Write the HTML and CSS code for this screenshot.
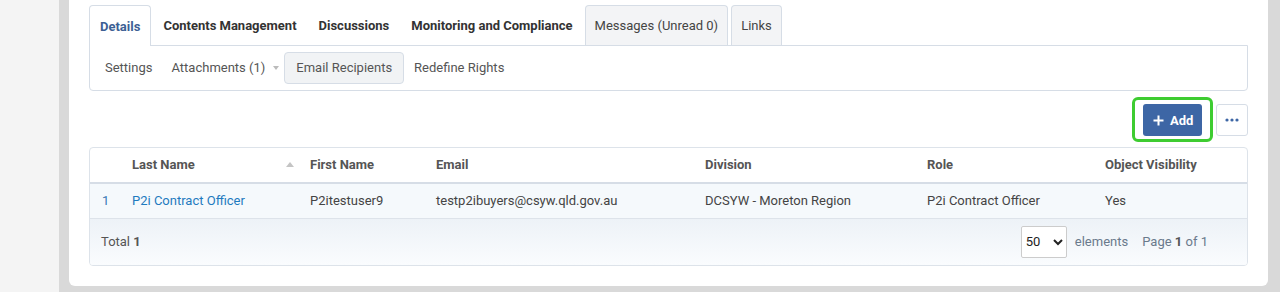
FILE: index.html
```html
<!DOCTYPE html>
<html lang="en">
<head>
    <meta charset="UTF-8">
    <meta name="viewport" content="width=device-width, initial-scale=1.0">
    <title>Email Recipients</title>
    <link rel="stylesheet" href="styles.css">
</head>
<body>
    <div class="sidebar"></div>
    <div class="content">
        <div class="card">
            <div class="tabs">
                <a class="tab active">Details</a>
                <a class="tab">Contents Management</a>
                <a class="tab">Discussions</a>
                <a class="tab">Monitoring and Compliance</a>
                <a class="tab boxed">Messages (Unread 0)</a>
                <a class="tab boxed">Links</a>
            </div>
            <div class="subnav">
                <a class="subitem">Settings</a>
                <a class="subitem">Attachments (1) <span class="caret"></span></a>
                <a class="subitem current">Email Recipients</a>
                <a class="subitem">Redefine Rights</a>
            </div>
            <div class="toolbar">
                <span class="highlight">
                    <button class="btn-add">
                        <svg width="11" height="11" viewBox="0 0 11 11"><path d="M5.5 0.5v10M0.5 5.5h10" stroke="#fff" stroke-width="2"/></svg>
                        Add
                    </button>
                </span>
                <button class="btn-more">
                    <svg width="14" height="4" viewBox="0 0 14 4"><circle cx="2" cy="2" r="1.6" fill="#3d66a5"/><circle cx="7" cy="2" r="1.6" fill="#3d66a5"/><circle cx="12" cy="2" r="1.6" fill="#3d66a5"/></svg>
                </button>
            </div>
            <div class="grid">
                <table>
                    <colgroup>
                        <col style="width:30px">
                        <col style="width:178px">
                        <col style="width:126px">
                        <col style="width:269px">
                        <col style="width:222px">
                        <col style="width:178px">
                        <col style="width:154px">
                    </colgroup>
                    <thead>
                        <tr>
                            <th></th>
                            <th><div class="sortable">Last Name <span class="sort-up"></span></div></th>
                            <th>First Name</th>
                            <th>Email</th>
                            <th>Division</th>
                            <th>Role</th>
                            <th>Object Visibility</th>
                        </tr>
                    </thead>
                    <tbody>
                        <tr>
                            <td class="num">1</td>
                            <td><a class="link">P2i Contract Officer</a></td>
                            <td>P2itestuser9</td>
                            <td>testp2ibuyers@csyw.qld.gov.au</td>
                            <td>DCSYW - Moreton Region</td>
                            <td>P2i Contract Officer</td>
                            <td>Yes</td>
                        </tr>
                    </tbody>
                </table>
                <div class="grid-footer">
                    <div class="total">Total <b>1</b></div>
                    <div class="paging">
                        <select class="page-size">
                            <option>50</option>
                        </select>
                        <span class="muted">elements</span>
                        <span class="muted">Page <b>1</b> of 1</span>
                    </div>
                </div>
            </div>
        </div>
    </div>
</body>
</html>
```

FILE: styles.css
```css
html, body {
    height: 100%;
}
body {
    margin: 0;
    display: flex;
    font-family: Roboto, "Liberation Sans", Arial, sans-serif;
    font-size: 13px;
    color: #555;
    background: #f4f4f4;
}
.sidebar {
    width: 60px;
    background: #f4f4f4;
}
.content {
    flex: 1;
    background: #d9d9d9;
    padding: 0 12px 7px 10px;
}
.card {
    background: #fff;
    padding: 5px 20px 20px 20px;
    border-radius: 0 0 6px 6px;
}

/* tabs */
.tabs {
    display: flex;
    height: 40px;
}
.tab {
    display: flex;
    align-items: center;
    padding: 0 11px;
    font-weight: bold;
    color: #333;
    border-radius: 4px 4px 0 0;
}
.tab.active {
    color: #3d5f94;
    background: #fff;
    border: 1px solid #d6dde6;
    border-bottom: none;
    position: relative;
    z-index: 1;
    height: 41px;
    box-sizing: border-box;
    padding: 1px 10px 0 10px;
    margin-right: 1px;
}
.tab.boxed {
    font-weight: normal;
    color: #444;
    background: #f3f4f6;
    border: 1px solid #d6dde6;
    border-bottom: none;
    padding: 0 9px 0 9px;
    margin-left: 1px;
}
.tab.boxed + .tab.boxed {
    margin-left: 3px;
}

.subnav {
    display: flex;
    align-items: center;
    height: 44px;
    padding: 0 5px;
    border: 1px solid #d6dde6;
    border-radius: 0 0 4px 4px;
}
.subitem {
    display: flex;
    align-items: center;
    height: 32px;
    padding: 0 10px 1px 10px;
    color: #555;
    box-sizing: border-box;
}
.subitem:nth-child(2) {
    padding-left: 9px;
    padding-right: 5px;
}
.caret {
    width: 0;
    height: 0;
    margin-left: 8px;
    border-left: 3.5px solid transparent;
    border-right: 3.5px solid transparent;
    border-top: 4px solid #bbb;
}
.subitem.current {
    background: #f1f3f5;
    border: 1px solid #d6dde6;
    border-radius: 4px;
    padding: 0 11px 1px 11px;
}

/* toolbar */
.toolbar {
    display: flex;
    justify-content: flex-end;
    align-items: center;
    padding: 6px 0 5px 0;
    gap: 3px;
}
.highlight {
    display: flex;
    border: 3px solid #3ecc31;
    border-radius: 6px;
    padding: 4px 8px 3px 8px;
}
.btn-add {
    display: flex;
    align-items: center;
    gap: 6px;
    height: 32px;
    width: 59px;
    padding: 0 0 0 10px;
    border: none;
    border-radius: 3px;
    background: #3d66a5;
    color: #fff;
    font-family: inherit;
    font-size: 13px;
    font-weight: bold;
}
.btn-more {
    display: flex;
    align-items: center;
    justify-content: center;
    width: 32px;
    height: 32px;
    background: #fff;
    border: 1px solid #d6dde6;
    border-radius: 3px;
    padding: 0;
}

/* grid */
.grid {
    border: 1px solid #dde3ea;
    border-radius: 4px;
    overflow: hidden;
}
table {
    width: 100%;
    table-layout: fixed;
    border-collapse: collapse;
}
th {
    height: 33px;
    text-align: left;
    padding: 0 12px 1px 12px;
    font-weight: bold;
    color: #555;
    border-bottom: 2px solid #d6dde6;
}
td {
    height: 33px;
    padding: 0 12px 1px 12px;
    color: #444;
    background: #f5f9fc;
    border-bottom: 1px solid #dde3ea;
}
.num {
    color: #3a78b5;
}
.link {
    color: #1f7bbf;
}
.sortable {
    display: flex;
    align-items: center;
    justify-content: space-between;
    margin-right: -8px;
}
.sort-up {
    width: 0;
    height: 0;
    border-left: 4.5px solid transparent;
    border-right: 4.5px solid transparent;
    border-bottom: 5px solid #c4c4c4;
}
.grid-footer {
    display: flex;
    justify-content: space-between;
    align-items: center;
    height: 46px;
    padding: 0 39px 1px 11px;
    box-sizing: border-box;
    background: linear-gradient(#edf2f7, #fafcfe);
}
.total b {
    color: #555;
}
.paging {
    display: flex;
    align-items: center;
    gap: 8px;
}
.page-size {
    width: 46px;
    height: 32px;
    font-family: inherit;
    font-size: 13px;
    color: #222;
    background: #fff;
    border: 1px solid #ccc;
    border-radius: 2px;
}
.muted {
    color: #6a7a8c;
}
.muted + .muted {
    margin-left: 6px;
}
.muted b {
    color: #555;
}
```
